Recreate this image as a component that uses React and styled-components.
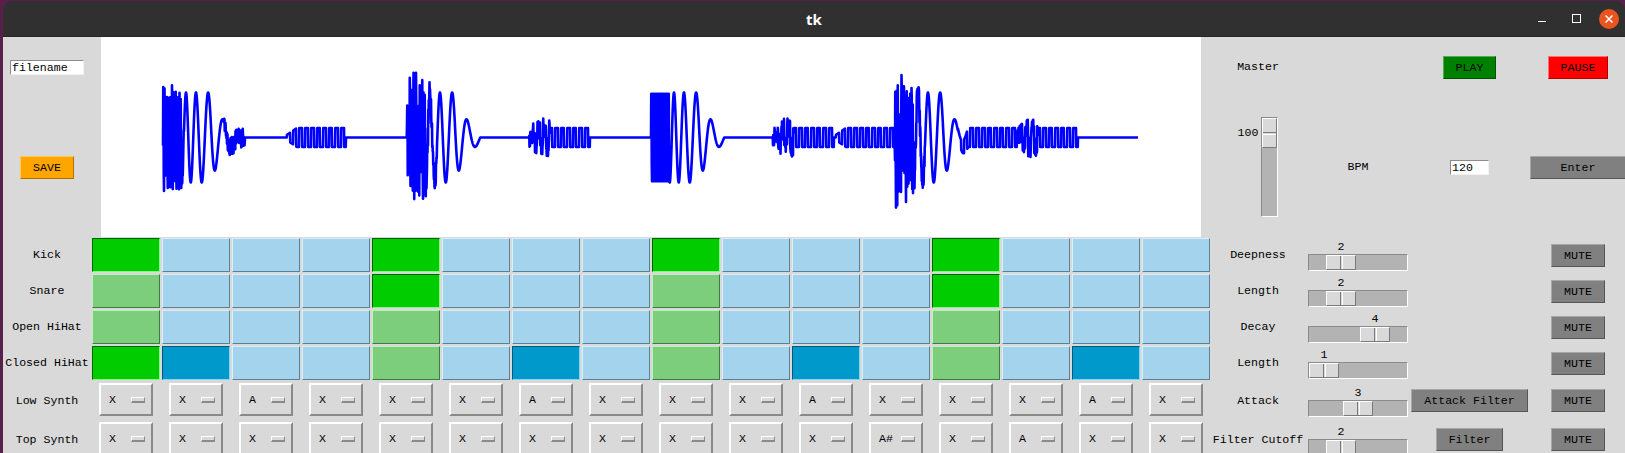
import React from 'react'
import styled, { createGlobalStyle } from 'styled-components'

const MONO = '"Liberation Mono", "DejaVu Sans Mono", monospace'
const COLUMNS = '88px repeat(16, 70px) 94px 106px 117px 100px'

const GlobalStyle = createGlobalStyle`
  html, body {
    margin: 0;
    padding: 0;
    background: #57204a;
  }
  body {
    font-family: ${MONO};
    font-size: 11.6px;
    color: #000;
  }
`

// tk-ish palette
const PAD = {
  idle: { bg: '#a4d3ee', hi: '#d8effc', lo: '#5d8194', sunken: false },
  on: { bg: '#0099cc', hi: '#7fd6f5', lo: '#005a7a', sunken: true },
  beat: { bg: '#7ccd7c', hi: '#baf2ba', lo: '#3f7a3f', sunken: false },
  beatOn: { bg: '#00cc00', hi: '#86f586', lo: '#006400', sunken: true },
}

const TONES = {
  gray: { bg: '#808080', hi: '#a8a8a8', lo: '#565656' },
  green: { bg: '#008000', hi: '#4fae4f', lo: '#005200' },
  red: { bg: '#ff0000', hi: '#ff7070', lo: '#b00000' },
  orange: { bg: '#ffa500', hi: '#ffc85a', lo: '#b07000' },
}

const PAD_ROWS = [
  { name: 'Kick', steps: '1000100010001000', side: 'Deepness', value: 2 },
  { name: 'Snare', steps: '0000100000001000', side: 'Length', value: 2 },
  { name: 'Open HiHat', steps: '0000000000000000', side: 'Decay', value: 4 },
  { name: 'Closed HiHat', steps: '1100001000100010', side: 'Length', value: 1 },
]

const SYNTH_ROWS = [
  {
    name: 'Low Synth',
    notes: ['X', 'X', 'A', 'X', 'X', 'X', 'A', 'X', 'X', 'X', 'A', 'X', 'X', 'X', 'A', 'X'],
    side: 'Attack',
    value: 3,
    action: 'Attack Filter',
  },
  {
    name: 'Top Synth',
    notes: ['X', 'X', 'X', 'X', 'X', 'X', 'X', 'X', 'X', 'X', 'X', 'A#', 'X', 'A', 'X', 'X'],
    side: 'Filter Cutoff',
    value: 2,
    action: 'Filter',
  },
]

// waveform of one pass through the pattern, in canvas coordinates
const STEP = 61
const START = 62
const END = 1037
const MID = 100.5

function buildWave() {
  let seed = 12345
  const rand = () => {
    seed = (seed * 16807) % 2147483647
    return seed / 2147483647
  }
  const kicks = [0, 4, 8, 12]
  const snares = [4, 12]
  const hats = [0, 1, 6, 10, 14]
  const notes = [2, 6, 10, 11, 13, 14]
  const pts = []
  for (let x = START; x <= END; x += 0.25) {
    let v = 0
    for (const s of kicks) {
      const u = x - (START + s * STEP)
      if (u < 0 || u > 90) continue
      if (u < 18) {
        v += 46 * Math.sin(u * Math.PI * 1.6)
      } else {
        const w = u - 18
        const p = 5 * Math.log(1 + 0.025 * w) - 0.339
        if (p < 4) {
          const amp = w < 30 ? 45 : 45 * Math.exp(-(w - 30) / 13)
          v += amp * Math.sin(p * 2 * Math.PI)
        }
      }
    }
    for (const s of snares) {
      const u = x - (START + s * STEP)
      if (u >= 0 && u < 30) v += (rand() * 2 - 1) * 32 * (1 - u / 40)
    }
    for (const s of hats) {
      const u = x - (START + s * STEP)
      if (u >= 0 && u < 21) v += (rand() * 2 - 1) * 10
    }
    for (const s of notes) {
      const u = x - (START + s * STEP)
      if (u >= 2 && u < 61) {
        const amp = 9.5 * Math.min(1, (u + 2) / 14)
        v += amp * (Math.sin((2 * Math.PI * (u - 2)) / 6) >= 0 ? 1 : -1)
      }
    }
    pts.push(`${x.toFixed(2)},${(MID - v).toFixed(1)}`)
  }
  return 'M' + pts.join(' L')
}

const WAVE = buildWave()

const Screen = styled.div`
  width: 1625px;
  height: 453px;
  box-sizing: border-box;
  padding: 1px 0 0 3px;
  overflow: hidden;
  background: #57204a;
`

const Window = styled.div`
  height: 452px;
  display: flex;
  flex-direction: column;
  border-radius: 9px 9px 0 0;
  overflow: hidden;
`

const TitleBar = styled.div`
  flex: none;
  height: 36px;
  box-sizing: border-box;
  background: #303030;
  border-bottom: 1px solid #262626;
  display: grid;
  grid-template-columns: 1fr auto 1fr;
  align-items: center;
`

const Title = styled.div`
  grid-column: 2;
  color: #ffffff;
  font: bold 15px "Noto Sans", "DejaVu Sans", sans-serif;
`

const Controls = styled.div`
  justify-self: end;
  display: flex;
  align-items: center;
`

const WinButton = styled.div`
  width: ${p => p.$w}px;
  height: 24px;
  display: flex;
  align-items: center;
  justify-content: center;
`

const MinGlyph = styled.div`
  width: 8px;
  height: 1px;
  margin-top: 5px;
  background: #fff;
`

const MaxGlyph = styled.div`
  width: 9px;
  height: 9px;
  box-sizing: border-box;
  border: 1px solid #fff;
`

const CloseCircle = styled.div`
  width: 20px;
  height: 20px;
  border-radius: 50%;
  background: #e95420;
  display: flex;
  align-items: center;
  justify-content: center;
`

const Body = styled.div`
  flex: 1;
  background: #d9d9d9;
  overflow: hidden;
`

const Board = styled.div`
  display: grid;
  grid-template-columns: ${COLUMNS};
  grid-template-rows: ${p => p.$rows};
  width: max-content;
`

const Canvas = styled.div`
  grid-column: span 16;
  grid-row: span 2;
  justify-self: center;
  width: 1100px;
  height: 200px;
  background: #ffffff;
`

const Label = styled.div`
  justify-self: center;
  align-self: center;
  white-space: nowrap;
  line-height: 14px;
`

const Gap = styled.span``

const Field = styled.div`
  justify-self: center;
  align-self: center;
  width: ${p => p.$w}px;
  height: 15px;
  box-sizing: border-box;
  padding-left: 1px;
  background: #ffffff;
  border: 1px solid;
  border-color: #8c8c8c #f2f2f2 #f2f2f2 #8c8c8c;
  line-height: 13px;
  white-space: nowrap;
  overflow: hidden;
`

const Btn = styled.div`
  justify-self: ${p => (p.$wide ? 'stretch' : 'center')};
  align-self: center;
  margin: 0 ${p => (p.$wide ? 2 : 0)}px;
  height: 23px;
  box-sizing: border-box;
  padding: 0 12px;
  background: ${p => TONES[p.$tone].bg};
  border: 1px solid;
  border-color: ${p => `${TONES[p.$tone].hi} ${TONES[p.$tone].lo} ${TONES[p.$tone].lo} ${TONES[p.$tone].hi}`};
  display: flex;
  align-items: center;
  justify-content: center;
  white-space: nowrap;
`

const Pad = styled.div`
  justify-self: center;
  align-self: center;
  width: 68px;
  height: 34px;
  box-sizing: border-box;
  background: ${p => PAD[p.$kind].bg};
  border: 1px solid;
  border-color: ${p => {
    const c = PAD[p.$kind]
    return c.sunken ? `${c.lo} ${c.hi} ${c.hi} ${c.lo}` : `${c.hi} ${c.lo} ${c.lo} ${c.hi}`
  }};
`

const Select = styled.div`
  justify-self: center;
  align-self: start;
  margin-top: 2px;
  width: 54px;
  height: 33px;
  box-sizing: border-box;
  padding: 0 6px 0 8px;
  background: #d9d9d9;
  border: 2px solid;
  border-color: #ffffff #8a8a8a #8a8a8a #ffffff;
  display: flex;
  align-items: center;
  justify-content: space-between;
`

const Indicator = styled.span`
  width: 14px;
  height: 6px;
  box-sizing: border-box;
  background: #d9d9d9;
  border: 1px solid;
  border-color: #ffffff #8a8a8a #8a8a8a #ffffff;
  border-bottom-width: 2px;
`

const HScale = styled.div`
  justify-self: center;
  align-self: center;
  width: 100px;
  height: 34px;
  box-sizing: border-box;
  padding-top: 1px;
  display: flex;
  flex-direction: column;
`

const ValueLine = styled.div`
  position: relative;
  height: 15px;
`

const Value = styled.span`
  position: absolute;
  top: 0;
  line-height: 15px;
  transform: translateX(-50%);
`

const Trough = styled.div`
  position: relative;
  width: ${p => (p.$vertical ? 17 : 100)}px;
  height: ${p => (p.$vertical ? 100 : 17)}px;
  box-sizing: border-box;
  background: #b3b3b3;
  border: 1px solid;
  border-color: #8a8a8a #ffffff #ffffff #8a8a8a;
`

const Thumb = styled.div`
  position: absolute;
  top: 0;
  left: 0;
  width: ${p => (p.$vertical ? 15 : 30)}px;
  height: ${p => (p.$vertical ? 30 : 15)}px;
  box-sizing: border-box;
  background: #d9d9d9;
  border: 1px solid;
  border-color: #ffffff #7a7a7a #7a7a7a #ffffff;

  &::after {
    content: '';
    position: absolute;
    ${p =>
      p.$vertical
        ? 'left: 0; right: 0; top: 13px; height: 1px; border-top: 1px solid #7a7a7a; border-bottom: 1px solid #fff;'
        : 'top: 0; bottom: 0; left: 13px; width: 1px; border-left: 1px solid #7a7a7a; border-right: 1px solid #fff;'}
  }
`

const VScale = styled.div`
  justify-self: center;
  align-self: center;
  display: flex;
  align-items: flex-start;
  gap: 3px;
`

const VValue = styled.span`
  margin-top: 9px;
  line-height: 14px;
`

function Scale({ value, from = 1, to = 5 }) {
  const offset = ((value - from) / (to - from)) * 68
  return (
    <HScale>
      <ValueLine>
        <Value style={{ left: offset + 16 }}>{value}</Value>
      </ValueLine>
      <Trough>
        <Thumb style={{ left: offset }} />
      </Trough>
    </HScale>
  )
}

function MasterScale({ value, from = 100, to = 0 }) {
  const offset = ((value - from) / (to - from)) * 68
  return (
    <VScale>
      <VValue style={{ marginTop: offset + 9 }}>{value}</VValue>
      <Trough $vertical>
        <Thumb $vertical style={{ top: offset }} />
      </Trough>
    </VScale>
  )
}

function padKind(on, i) {
  const beat = i % 4 === 0
  if (on) return beat ? 'beatOn' : 'on'
  return beat ? 'beat' : 'idle'
}

function App() {
  return (
    <Screen>
      <GlobalStyle />
      <Window>
        <TitleBar>
          <Title>tk</Title>
          <Controls>
            <WinButton $w={34}><MinGlyph /></WinButton>
            <WinButton $w={34}><MaxGlyph /></WinButton>
            <WinButton $w={32}>
              <CloseCircle>
                <svg width="8" height="8" viewBox="0 0 8 8">
                  <path d="M0.5 0.5 L7.5 7.5 M7.5 0.5 L0.5 7.5" stroke="#fff" strokeWidth="1.5" />
                </svg>
              </CloseCircle>
            </WinButton>
          </Controls>
        </TitleBar>

        <Body>
          <Board $rows="60px 140px">
            <Field $w={74}>filename</Field>
            <Canvas>
              <svg width="1100" height="200" viewBox="0 0 1100 200">
                <path d={WAVE} fill="none" stroke="#0000ff" strokeWidth="2.6" strokeLinejoin="round" />
              </svg>
            </Canvas>
            <Label>Master</Label>
            <Gap />
            <Btn $tone="green">PLAY</Btn>
            <Btn $tone="red">PAUSE</Btn>

            <Btn $tone="orange">SAVE</Btn>
            <MasterScale value={100} />
            <Label>BPM</Label>
            <Field $w={39}>120</Field>
            <Btn $tone="gray" $wide>Enter</Btn>
          </Board>

          <Board $rows="36px 36px 36px 36px 39px 39px">
            {PAD_ROWS.map(row => (
              <React.Fragment key={row.name + row.side}>
                <Label>{row.name}</Label>
                {row.steps.split('').map((s, i) => (
                  <Pad key={i} $kind={padKind(s === '1', i)} />
                ))}
                <Label>{row.side}</Label>
                <Scale value={row.value} />
                <Gap />
                <Btn $tone="gray">MUTE</Btn>
              </React.Fragment>
            ))}
            {SYNTH_ROWS.map(row => (
              <React.Fragment key={row.name}>
                <Label>{row.name}</Label>
                {row.notes.map((n, i) => (
                  <Select key={i}>
                    <span>{n}</span>
                    <Indicator />
                  </Select>
                ))}
                <Label>{row.side}</Label>
                <Scale value={row.value} />
                <Btn $tone="gray">{row.action}</Btn>
                <Btn $tone="gray">MUTE</Btn>
              </React.Fragment>
            ))}
          </Board>
        </Body>
      </Window>
    </Screen>
  )
}

export default App
